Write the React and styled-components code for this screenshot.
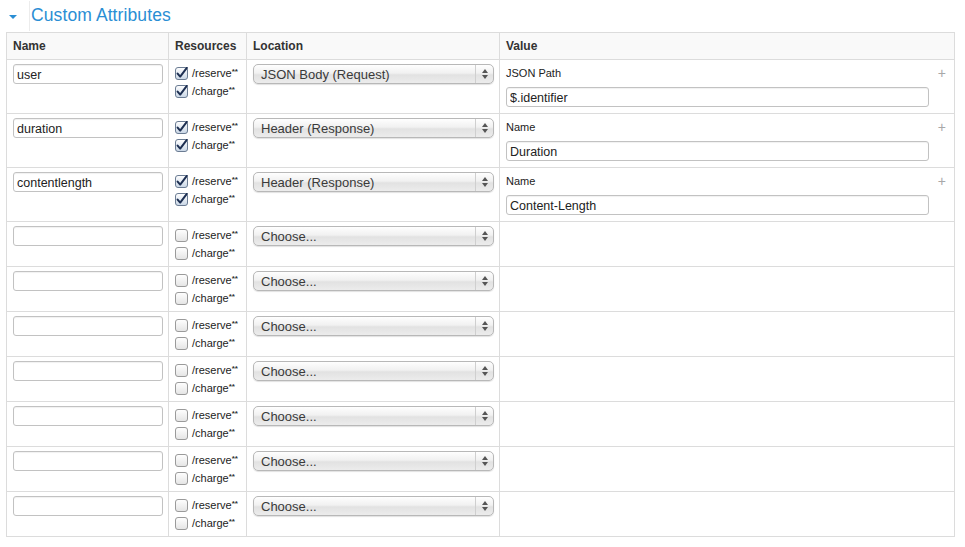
import React from "react";
import styled, { createGlobalStyle } from "styled-components";

const GlobalStyle = createGlobalStyle`
  body {
    margin: 0;
    background: #ffffff;
    font-family: "Liberation Sans", Arial, sans-serif;
    color: #333;
  }
`;

const rows = [
  { name: "user", checked: true, location: "JSON Body (Request)", label: "JSON Path", value: "$.identifier" },
  { name: "duration", checked: true, location: "Header (Response)", label: "Name", value: "Duration" },
  { name: "contentlength", checked: true, location: "Header (Response)", label: "Name", value: "Content-Length" },
  { name: "", checked: false, location: "Choose..." },
  { name: "", checked: false, location: "Choose..." },
  { name: "", checked: false, location: "Choose..." },
  { name: "", checked: false, location: "Choose..." },
  { name: "", checked: false, location: "Choose..." },
  { name: "", checked: false, location: "Choose..." },
  { name: "", checked: false, location: "Choose..." },
];

const Check = ({ checked }) => (
  <svg width="13" height="13" viewBox="0 0 13 13">
    <defs>
      <linearGradient id={checked ? "cbOn" : "cbOff"} x1="0" y1="0" x2="0" y2="1">
        <stop offset="0" stopColor="#ffffff" />
        <stop offset="1" stopColor={checked ? "#c9d6e6" : "#e4e4e4"} />
      </linearGradient>
    </defs>
    <rect
      x="0.5"
      y="0.5"
      width="12"
      height="12"
      rx="2.5"
      fill={`url(#${checked ? "cbOn" : "cbOff"})`}
      stroke={checked ? "#6b7c93" : "#9a9a9a"}
    />
    {checked && (
      <path
        d="M2.6 6.6 L5.2 9.6 L11.8 0.8"
        fill="none"
        stroke="#1d2f52"
        strokeWidth="2"
        strokeLinecap="round"
        strokeLinejoin="round"
      />
    )}
  </svg>
);

export default function App() {
  return (
    <>
      <GlobalStyle />
      <Section>
        <TitleBar>
          <Toggle>
            <Caret />
          </Toggle>
          <Title>Custom Attributes</Title>
        </TitleBar>
        <Table>
          <colgroup>
            <col style={{ width: 162 }} />
            <col style={{ width: 78 }} />
            <col style={{ width: 253 }} />
            <col />
          </colgroup>
          <thead>
            <tr>
              <Th>Name</Th>
              <Th>Resources</Th>
              <Th>Location</Th>
              <Th>Value</Th>
            </tr>
          </thead>
          <tbody>
            {rows.map((r, i) => (
              <tr key={i}>
                <Td>
                  <TextInput defaultValue={r.name} $width={150} />
                </Td>
                <Td>
                  <ResourceLine>
                    <Check checked={r.checked} />
                    <span>
                      /reserve<Stars>**</Stars>
                    </span>
                  </ResourceLine>
                  <ResourceLine>
                    <Check checked={r.checked} />
                    <span>
                      /charge<Stars>**</Stars>
                    </span>
                  </ResourceLine>
                </Td>
                <Td>
                  <SelectBox>
                    <SelectText>{r.location}</SelectText>
                    <SelectArrows>
                      <ArrowUp />
                      <ArrowDown />
                    </SelectArrows>
                  </SelectBox>
                </Td>
                <Td>
                  {r.label && (
                    <ValueWrap>
                      <ValueMain>
                        <ValueLabel>{r.label}</ValueLabel>
                        <TextInput defaultValue={r.value} $width={423} />
                      </ValueMain>
                      <Plus>+</Plus>
                    </ValueWrap>
                  )}
                </Td>
              </tr>
            ))}
          </tbody>
        </Table>
      </Section>
    </>
  );
}

const Section = styled.div`
  padding: 0 10px 0 6px;
  width: 949px;
`;

const TitleBar = styled.div`
  display: flex;
  align-items: center;
  height: 32px;
  margin-left: -6px;
`;

const Toggle = styled.div`
  width: 30px;
  height: 30px;
  display: flex;
  align-items: center;
  justify-content: center;
  border-right: 1px solid #ececec;
  box-sizing: border-box;
  padding-right: 4px;
`;

const Caret = styled.span`
  width: 0;
  height: 0;
  border-left: 4px solid transparent;
  border-right: 4px solid transparent;
  border-top: 4px solid #2a8ed4;
  margin-top: 1px;
`;

const Title = styled.h2`
  margin: 0 0 2px 1px;
  font-size: 17.5px;
  font-weight: normal;
  color: #2a8ed4;
  letter-spacing: 0.1px;
`;

const Table = styled.table`
  border-collapse: collapse;
  table-layout: fixed;
  width: 949px;
  border: 1px solid #dcdcdc;
`;

const Th = styled.th`
  height: 27px;
  padding: 0 6px;
  text-align: left;
  font-size: 12px;
  font-weight: bold;
  color: #333;
  background: #f9f9f9;
  border: 1px solid #dcdcdc;
  box-sizing: border-box;
`;

const Td = styled.td`
  padding: 4px 6px 4px 6px;
  vertical-align: top;
  border: 1px solid #dcdcdc;
`;

const TextInput = styled.input`
  display: block;
  box-sizing: border-box;
  width: ${(p) => p.$width}px;
  height: 20px;
  margin: 0;
  padding: 1px 3px 0;
  border: 1px solid #c2c2c2;
  border-radius: 3px;
  font-family: "Liberation Sans", Arial, sans-serif;
  font-size: 12.5px;
  color: #222;
  background: #fff;
  box-shadow: inset 0 1px 1px rgba(0, 0, 0, 0.06);
  outline: none;
`;

const ResourceLine = styled.div`
  display: flex;
  align-items: center;
  gap: 4px;
  height: 18px;
  font-size: 11px;
  color: #222;
  white-space: nowrap;
  svg {
    flex: none;
  }
`;

const Stars = styled.sup`
  font-size: 8px;
  font-weight: bold;
  vertical-align: 3px;
  line-height: 0;
  color: #333;
`;

const SelectBox = styled.div`
  position: relative;
  box-sizing: border-box;
  width: 241px;
  height: 20px;
  display: flex;
  align-items: center;
  border: 1px solid #b8b8b8;
  border-radius: 5px;
  background: linear-gradient(#fefefe 0%, #f1f1f1 45%, #e2e2e2 55%, #ececec 100%);
  box-shadow: 0 1px 1px rgba(0, 0, 0, 0.12);
  font-size: 13px;
  color: #3a3a3a;
`;

const SelectText = styled.span`
  flex: 1;
  padding-left: 7px;
  white-space: nowrap;
`;

const SelectArrows = styled.span`
  width: 17px;
  height: 100%;
  border-left: 1px solid #cfcfcf;
  display: flex;
  flex-direction: column;
  align-items: center;
  justify-content: center;
  gap: 2px;
`;

const ArrowUp = styled.span`
  width: 0;
  height: 0;
  border-left: 3px solid transparent;
  border-right: 3px solid transparent;
  border-bottom: 4px solid #555;
`;

const ArrowDown = styled.span`
  width: 0;
  height: 0;
  border-left: 3px solid transparent;
  border-right: 3px solid transparent;
  border-top: 4px solid #555;
`;

const ValueWrap = styled.div`
  display: flex;
  justify-content: space-between;
  margin-bottom: 2px;
`;

const ValueMain = styled.div`
  display: flex;
  flex-direction: column;
`;

const ValueLabel = styled.div`
  height: 18px;
  line-height: 18px;
  margin-bottom: 5px;
  font-size: 11px;
  color: #222;
`;

const Plus = styled.span`
  font-size: 14px;
  line-height: 18px;
  color: #a8a8a8;
  margin-right: 2px;
`;
